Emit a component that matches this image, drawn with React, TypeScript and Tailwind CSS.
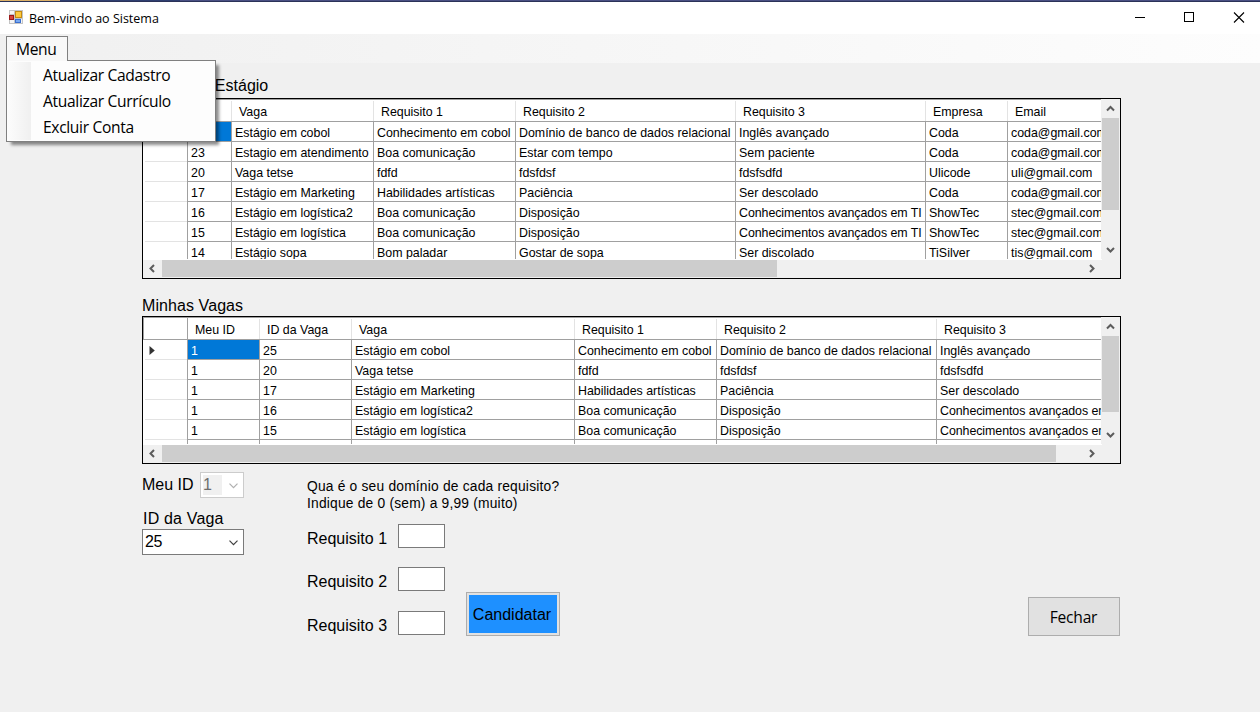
import React from "react";

type Column = { title: string; cls: string };

const sans = "font-['Liberation_Sans',Arial,sans-serif]";
const ui = "font-['Open_Sans','Noto_Sans',sans-serif]";

const vagasColumns: Column[] = [
  { title: "ID", cls: "w-[44px]" },
  { title: "Vaga", cls: "w-[142px]" },
  { title: "Requisito 1", cls: "w-[142px]" },
  { title: "Requisito 2", cls: "w-[220px]" },
  { title: "Requisito 3", cls: "w-[190px]" },
  { title: "Empresa", cls: "w-[82px]" },
  { title: "Email", cls: "w-[140px]" },
];

const vagasRows: string[][] = [
  ["25", "Estágio em cobol", "Conhecimento em cobol", "Domínio de banco de dados relacional", "Inglês avançado", "Coda", "coda@gmail.com"],
  ["23", "Estagio em atendimento", "Boa comunicação", "Estar com tempo", "Sem paciente", "Coda", "coda@gmail.com"],
  ["20", "Vaga tetse", "fdfd", "fdsfdsf", "fdsfsdfd", "Ulicode", "uli@gmail.com"],
  ["17", "Estágio em Marketing", "Habilidades artísticas", "Paciência", "Ser descolado", "Coda", "coda@gmail.com"],
  ["16", "Estágio em logística2", "Boa comunicação", "Disposição", "Conhecimentos avançados em TI", "ShowTec", "stec@gmail.com"],
  ["15", "Estágio em logística", "Boa comunicação", "Disposição", "Conhecimentos avançados em TI", "ShowTec", "stec@gmail.com"],
  ["14", "Estágio sopa", "Bom paladar", "Gostar de sopa", "Ser discolado", "TiSilver", "tis@gmail.com"],
];

const minhasColumns: Column[] = [
  { title: "Meu ID", cls: "w-[72px]" },
  { title: "ID da Vaga", cls: "w-[92px]" },
  { title: "Vaga", cls: "w-[223px]" },
  { title: "Requisito 1", cls: "w-[142px]" },
  { title: "Requisito 2", cls: "w-[220px]" },
  { title: "Requisito 3", cls: "w-[190px]" },
];

const minhasRows: string[][] = [
  ["1", "25", "Estágio em cobol", "Conhecimento em cobol", "Domínio de banco de dados relacional", "Inglês avançado"],
  ["1", "20", "Vaga tetse", "fdfd", "fdsfdsf", "fdsfsdfd"],
  ["1", "17", "Estágio em Marketing", "Habilidades artísticas", "Paciência", "Ser descolado"],
  ["1", "16", "Estágio em logística2", "Boa comunicação", "Disposição", "Conhecimentos avançados em TI"],
  ["1", "15", "Estágio em logística", "Boa comunicação", "Disposição", "Conhecimentos avançados em TI"],
  ["", "", "", "", "", ""],
];

const arrowPaths = {
  up: "M1 6.5 L4.5 3 L8 6.5",
  down: "M1 3 L4.5 6.5 L8 3",
  left: "M6 1 L2.5 4.5 L6 8",
  right: "M2 1 L5.5 4.5 L2 8",
};

function Arrow({ dir }: { dir: keyof typeof arrowPaths }) {
  return (
    <svg width="9" height="9" viewBox="0 0 9 9" fill="none" stroke="#5c5c5c" strokeWidth="2">
      <path d={arrowPaths[dir]} />
    </svg>
  );
}

function DataGrid(props: {
  columns: Column[];
  rows: string[][];
  heightCls: string;
  hThumbCls: string;
  vThumbCls: string;
}) {
  const { columns, rows, heightCls, hThumbCls, vThumbCls } = props;
  return (
    <div className={`flex w-[979px] flex-col border border-black bg-[#f0f0f0] text-[12.4px] leading-none text-black ${sans} ${heightCls}`}>
      <div className="flex min-h-0 flex-1">
        <div className="mr-px w-[958px] overflow-hidden bg-white">
          <div className="flex h-[23px] w-max border-y border-[#a0a0a0]">
            <div className="w-[45px] border-x border-[#a0a0a0]" />
            {columns.map((c) => (
              <div key={c.title} className={`flex shrink-0 items-center ${c.cls}`}>
                <span className="flex-1 whitespace-nowrap pl-[7px] pt-[3px]">{c.title}</span>
                <span className="mt-px h-5 w-px bg-[#e3e3e3]" />
              </div>
            ))}
          </div>
          {rows.map((row, r) => (
            <div key={r} className="flex h-5 w-max">
              <div className="flex w-[45px] items-center border-r border-[#a0a0a0] pl-[2px]">
                <div className="flex h-5 flex-1 items-center border-b border-[#e3e3e3] pl-1 pt-[2px]">
                  {r === 0 && (
                    <svg width="6" height="9" viewBox="0 0 6 9">
                      <path d="M0.5 0 L5.8 4.5 L0.5 9 Z" fill="#333" />
                    </svg>
                  )}
                </div>
              </div>
              {row.map((value, i) => (
                <div
                  key={i}
                  className={`shrink-0 overflow-hidden whitespace-nowrap border-b border-r border-[#a0a0a0] pl-[3px] pt-[5px] ${columns[i].cls} ${r === 0 && i === 0 ? "bg-[#0078d7] text-white" : ""} ${value.length === 29 ? "tracking-[-0.06px]" : ""}`}
                >
                  {value}
                </div>
              ))}
            </div>
          ))}
        </div>
        <div className="flex w-[17px] flex-col">
          <div className="flex h-[19px] items-center justify-center">
            <Arrow dir="up" />
          </div>
          <div className={`bg-[#cdcdcd] ${vThumbCls}`} />
          <div className="flex-1" />
          <div className="flex h-[19px] items-center justify-center">
            <Arrow dir="down" />
          </div>
        </div>
      </div>
      <div className="h-px w-[959px] shrink-0 bg-white" />
      <div className="mb-px flex h-[17px] w-[959px] shrink-0">
        <div className="flex w-[19px] items-center justify-center">
          <Arrow dir="left" />
        </div>
        <div className={`bg-[#cdcdcd] ${hThumbCls}`} />
        <div className="flex-1" />
        <div className="flex w-[19px] items-center justify-center">
          <Arrow dir="right" />
        </div>
      </div>
    </div>
  );
}

function ComboChevron({ color }: { color: string }) {
  return (
    <svg width="9" height="6" viewBox="0 0 9 6" fill="none" stroke={color} strokeWidth="1.2">
      <path d="M0.5 0.7 L4.5 4.7 L8.5 0.7" />
    </svg>
  );
}

function AppIcon() {
  return (
    <svg width="14" height="14" viewBox="0 0 14 14" shapeRendering="crispEdges">
      <rect x="0" y="0" width="14" height="14" fill="#c4c4c4" />
      <rect x="1" y="1" width="4" height="3" fill="#f4f4f4" />
      <rect x="1" y="10" width="4" height="3" fill="#f4f4f4" />
      <rect x="12" y="9" width="1" height="4" fill="#f4f4f4" />
      <rect x="6" y="1" width="7" height="7" fill="#c48a12" />
      <rect x="7" y="2" width="5" height="5" fill="#fcc93c" />
      <rect x="0" y="5" width="5" height="5" fill="#9c1a1a" />
      <rect x="1" y="6" width="3" height="3" fill="#d8443c" />
      <rect x="6" y="9" width="6" height="4" fill="#3a6fd0" />
      <rect x="7" y="10" width="4" height="2" fill="#78a8f0" />
    </svg>
  );
}

function RequisitoField({ n }: { n: number }) {
  return (
    <div className="flex h-6 items-center">
      <label className="w-[91px] whitespace-nowrap pt-[6px] text-[16px] leading-none">Requisito {n}</label>
      <div className="h-6 w-[47px] border border-[#7a7a7a] bg-white" />
    </div>
  );
}

export default function App() {
  return (
    <div className={`relative flex h-[712px] w-[1260px] flex-col overflow-hidden bg-[#f0f0f0] text-black ${sans}`}>
      <div className="flex h-[2px] shrink-0 border-b border-[#2b3258]">
        <div className="w-[60px] bg-[#dcb068]" />
        <div className="w-[120px] bg-[#2f3f70]" />
        <div className="flex-1 bg-[#4a5083]" />
      </div>
      <header className="flex h-8 shrink-0 items-center bg-white">
        <div className="mb-[2px] ml-[9px]">
          <AppIcon />
        </div>
        <span className={`ml-[6px] flex-1 whitespace-nowrap pt-[2px] text-[12.5px] leading-none ${ui}`}>Bem-vindo ao Sistema</span>
        <div className="mb-[2px] mr-[15px] flex items-center">
          <svg width="110" height="11" viewBox="0 0 110 11" fill="none" stroke="#000" className="overflow-visible">
            <path d="M0 5.5 H10" shapeRendering="crispEdges" />
            <rect x="49.5" y="0.5" width="9" height="9" shapeRendering="crispEdges" />
            <path d="M99 0.5 L109 10.5 M109 0.5 L99 10.5" strokeWidth="1.1" />
          </svg>
        </div>
      </header>
      <div className="h-[29px] shrink-0 bg-linear-to-r from-[#f0f0f0] to-[#fdfdfd]" />

      <main className="flex flex-col pl-[142px]">
        <h2 className="h-[35px] whitespace-nowrap pl-[2px] pt-[15px] text-[16px] leading-none">Vagas de Estágio</h2>
        <DataGrid columns={vagasColumns} rows={vagasRows} heightCls="h-[181px]" hThumbCls="w-[615px]" vThumbCls="h-[92px]" />
        <h2 className="h-[37px] pt-[19px] text-[16px] leading-none tracking-[0.08px]">Minhas Vagas</h2>
        <DataGrid columns={minhasColumns} rows={minhasRows} heightCls="h-[148px]" hThumbCls="w-[894px]" vThumbCls="h-[76px]" />

        <div className="flex">
          <section className="w-[165px] pt-2">
            <div className="flex h-[26px]">
              <label className="w-[58px] pt-[5px] text-[16px] leading-none">Meu ID</label>
              <div className="flex h-[26px] w-[44px] border border-[#cccccc] bg-white p-[2px]">
                <div className="w-[19px] bg-[#f0f0f0] pt-[2px] text-[16px] leading-none text-[#6d6d6d]">1</div>
                <div className="flex flex-1 items-center justify-center pl-[3px] pt-px">
                  <ComboChevron color="#b0b0b0" />
                </div>
              </div>
            </div>
            <label className="block h-[31px] pl-px pt-[13px] text-[16px] leading-none tracking-[0.18px]">ID da Vaga</label>
            <div className="flex h-[26px] w-[102px] items-center justify-between border border-[#7a7a7a] bg-white pl-[2px] pr-[5px]">
              <span className="text-[16px] leading-none tracking-[-0.5px]">25</span>
              <span className="pt-[2px]">
                <ComboChevron color="#404040" />
              </span>
            </div>
          </section>

          <section className="w-[159px] pt-[14px]">
            <p className="h-[46px] whitespace-nowrap text-[13.8px] leading-[17px] tracking-[0.2px]">
              Qua é o seu domínio de cada requisito?
              <br />
              Indique de 0 (sem) a 9,99 (muito)
            </p>
            <div className="flex flex-col">
              <RequisitoField n={1} />
              <div className="h-[19px]" />
              <RequisitoField n={2} />
              <div className="h-5" />
              <RequisitoField n={3} />
            </div>
          </section>

          <button className="mt-[128px] h-[44px] w-[94px] border border-[#adadad] bg-[#e1e1e1] p-[2px]">
            <span className="flex h-full items-center justify-center bg-[#1e90ff] pr-[2px] pt-[2px] text-[16px] leading-none">Candidatar</span>
          </button>
          <button className={`ml-[468px] mt-[133px] h-[39px] w-[92px] border border-[#adadad] bg-[#e1e1e1] pr-px pt-[2px] text-[15.6px] tracking-[-0.25px] ${ui}`}>Fechar</button>
        </div>
      </main>

      <nav className={`absolute left-[6px] top-[36px] text-[15.6px] leading-none tracking-[-0.34px] ${ui}`}>
        <div className="relative z-10 h-[25px] w-[62px] border border-b-0 border-[#808080] bg-[#f8f8f8] pl-[9px] pt-[5px]">Menu</div>
        <ul className="-mt-px flex h-[82px] w-[210px] flex-col border border-[#808080] bg-[#fdfdfd] bg-[linear-gradient(90deg,#fcfcfc,#f0f0f0)] bg-[length:23px_78px] bg-position-[1px_1px] bg-no-repeat pl-9 pt-[2px] shadow-[4px_4px_3px_-1px_rgba(0,0,0,0.45)]">
          <li className="flex h-[26px] items-center whitespace-nowrap">Atualizar Cadastro</li>
          <li className="flex h-[26px] items-center whitespace-nowrap">Atualizar Currículo</li>
          <li className="flex h-[26px] items-center whitespace-nowrap">Excluir Conta</li>
        </ul>
      </nav>
    </div>
  );
}
